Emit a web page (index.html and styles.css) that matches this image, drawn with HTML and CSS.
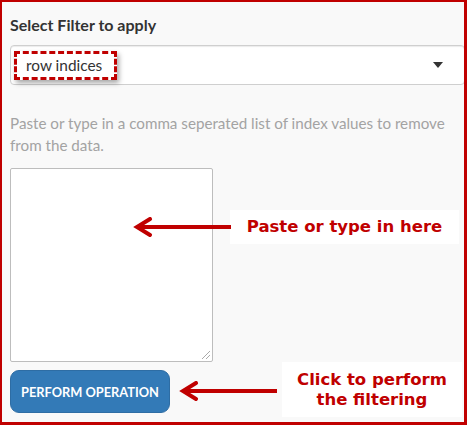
FILE: index.html
```html
<!DOCTYPE html>
<html>
<head>
<meta charset="utf-8">
<link rel="stylesheet" href="styles.css">
</head>
<body>
<div class="frame">
  <label class="title">Select Filter to apply</label>
  <div class="select">
    <span class="value">row indices</span>
    <span class="caret"></span>
  </div>
  <p class="help">Paste or type in a comma seperated list of index values to remove from the data.</p>
  <div class="textarea"><span class="grip"></span></div>
  <button class="btn">PERFORM OPERATION</button>

  <div class="note note1">Paste or type in here</div>
  <div class="note note2">Click to perform<br>the filtering</div>
  <svg class="arrow arrow1" width="100" height="20" viewBox="0 0 100 20">
    <path d="M98 10 H4" stroke="#c00000" stroke-width="4" fill="none"/>
    <path d="M17 2 L4 10 L17 18" stroke="#c00000" stroke-width="4" fill="none" stroke-linecap="round" stroke-linejoin="miter"/>
  </svg>
  <svg class="arrow arrow2" width="100" height="20" viewBox="0 0 100 20">
    <path d="M98 10 H4" stroke="#c00000" stroke-width="4" fill="none"/>
    <path d="M17 2 L4 10 L17 18" stroke="#c00000" stroke-width="4" fill="none" stroke-linecap="round" stroke-linejoin="miter"/>
  </svg>
</div>
</body>
</html>
```
FILE: styles.css
```css
html, body { margin: 0; padding: 0; background: #fff; }
.frame {
  position: relative;
  box-sizing: border-box;
  width: 467px;
  height: 425px;
  border-style: solid;
  border-color: #c00000;
  border-width: 2px 3px 3px 2px;
  background: #f9f9f9;
  padding: 13px 0 0 8px;
  overflow: hidden;
  font-family: Lato, "Open Sans", sans-serif;
  color: #333;
}
.title {
  display: block;
  font-weight: bold;
  font-size: 16px;
  line-height: 20px;
  height: 20px;
}
.select {
  margin-top: 10px;
  box-sizing: border-box;
  width: 455px;
  height: 40px;
  background: #fff;
  border: 1px solid #cfcfcf;
  border-radius: 4px;
  box-shadow: inset 0 1px 1px rgba(0,0,0,0.08);
  display: flex;
  align-items: center;
  justify-content: space-between;
  padding: 0 21px 0 3px;
}
.value {
  font-size: 15.4px;
  color: #333;
  border: 3px dashed #c00000;
  padding: 2px 12px 3px 9px;
  box-shadow: 2px 3px 5px rgba(0,0,0,0.35);
  line-height: 18px;
}
.caret {
  width: 0; height: 0;
  border-left: 5px solid transparent;
  border-right: 5px solid transparent;
  border-top: 6px solid #333;
}
.help {
  margin: 27px 0 0 0;
  width: 452px;
  font-size: 15.2px;
  line-height: 22px;
  color: #a3a3a3;
}
.textarea {
  position: relative;
  margin-top: 12px;
  box-sizing: border-box;
  width: 203px;
  height: 194px;
  background: #fff;
  border: 1px solid #bdbdbd;
  border-radius: 2px;
}
.grip {
  position: absolute;
  right: 2px; bottom: 2px;
  width: 8px; height: 8px;
  background: linear-gradient(135deg, transparent 45%, #aaa 45%, #aaa 55%, transparent 55%, transparent 70%, #aaa 70%, #aaa 80%, transparent 80%);
}
.btn {
  display: block;
  margin-top: 8px;
  width: 160px;
  height: 43px;
  background: #337ab7;
  border: 1px solid #2e6da4;
  border-radius: 9px;
  color: #fff;
  font-family: Lato, "Open Sans", sans-serif;
  font-weight: bold;
  font-size: 12.8px;
  padding: 0;
}
.note {
  position: absolute;
  background: #fff;
  color: #c00000;
  font-family: Verdana, "DejaVu Sans", sans-serif;
  font-weight: bold;
  text-align: center;
}
.note1 {
  left: 228px; top: 208px;
  width: 229px; height: 34px;
  font-size: 16.5px;
  line-height: 34px;
}
.note2 {
  left: 280px; top: 360px;
  width: 180px; height: 55px;
  font-size: 16.5px;
  line-height: 20px;
  padding-top: 8px;
  box-sizing: border-box;
}
.arrow { position: absolute; }
.arrow1 { left: 131px; top: 215px; }
.arrow2 { left: 177px; top: 379px; }
```
